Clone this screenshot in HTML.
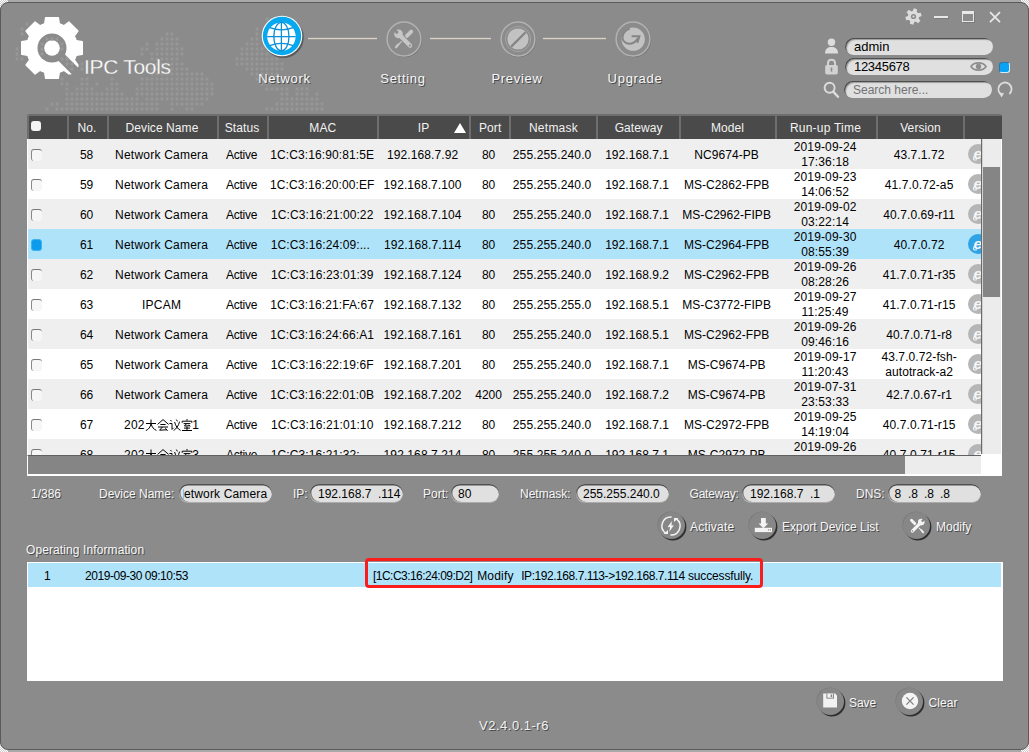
<!DOCTYPE html>
<html><head><meta charset="utf-8"><title>IPC Tools</title>
<style>
html,body{margin:0;padding:0;}
body{width:1029px;height:752px;overflow:hidden;background:#a9a9a9;font-family:"Liberation Sans",sans-serif;font-size:12px;color:#000;position:relative;}
.cb{position:absolute;width:8px;height:8px;background-color:#fff;background-image:linear-gradient(45deg,#ccc 25%,transparent 25%,transparent 75%,#ccc 75%),linear-gradient(45deg,#ccc 25%,transparent 25%,transparent 75%,#ccc 75%);background-size:2px 2px;background-position:0 0,1px 1px;}
.c1{left:0;top:0}.c2{right:0;top:0}.c3{left:0;bottom:0}.c4{right:0;bottom:0}
#frame{position:absolute;left:0;top:2px;width:1029px;height:748px;border:1px solid #5a5a5a;border-radius:8px;background:#8b8b8b;}
#win{position:absolute;left:0;top:0;width:1029px;height:752px;}
#win *{position:absolute;box-sizing:border-box;}
.sh{color:#f7f7f7;text-shadow:1px 1px 0 #4a4a4a;white-space:nowrap;}

/* ---------- table header ---------- */
#thead{left:27px;top:114px;width:975px;height:25px;border-top-left-radius:3px;border-top-right-radius:2px;background:#4a4a4a;border-top:2px solid #6e6e6e;border-left:2px solid #6e6e6e;overflow:hidden;}
#thead .th{top:-1px;height:24px;line-height:26px;letter-spacing:.08px;text-align:center;color:#f2f2f2;font-size:12px;white-space:nowrap;margin-left:-3px;}
#thead .hs{top:0;width:2px;height:23px;background:#6e6e6e;margin-left:-2px;}
.hchk{left:5px;top:5.5px;width:10px;height:10px;border-radius:3px;background:#f4f4f4;}
.ipt{left:0;width:100%;top:0;text-align:center;padding-right:2px;}
.tri{right:4.7px;top:8px;width:0;height:0;border-left:6px solid transparent;border-right:6px solid transparent;border-bottom:10px solid #fff;}

/* ---------- table body ---------- */
#tbody{left:27px;top:139px;width:955px;height:316px;background:#fff;overflow:hidden;border-left:1px solid #fff;}
.tr{left:0;width:975px;height:30px;background:#fff;}
.tr.alt{background:#efefef;}
.tr.sel{background:#afe3fa;}
.td{top:1px;height:30px;line-height:30px;text-align:center;white-space:nowrap;font-size:12px;color:#000;margin-left:-2.4px;}
.td.la{text-align:left;padding-left:4.2px;}
.k1{letter-spacing:.22px}.k3{letter-spacing:.1px;padding-left:1.2px}.k2{letter-spacing:-.25px}.k4{letter-spacing:.1px}.k6{letter-spacing:.15px}.k7{letter-spacing:.05px}.k9{letter-spacing:.15px}.k8{letter-spacing:.05px}.k10{letter-spacing:.1px}
.td.two{line-height:15px;top:1px;}
.chk{left:3px;top:10px;width:11px;height:12px;border-radius:3px;background:#f6f6f6;border-top:1px solid #777;border-left:1px solid #888;}
.chk.on{background:#0d9cec;border:1px solid #3ab4f2;}
.ie{left:940px;top:5px;width:20px;height:20px;}
.ie svg{left:0;top:0;}
.iec{fill:#b6b6b6}.ie.on .iec{fill:#2ea3e6}
.iee{fill:#f4f4f4;fill-rule:evenodd}
.ieo{fill:none;stroke:#f4f4f4;stroke-width:1.1}
.iet{fill:#f6f6f6}
#vsb{left:981px;top:139px;width:21px;height:315px;background:#ececec;border-left:1.4px solid #6a6a6a;box-shadow:inset 1px 0 0 #d2d2d2;border-right:1px solid #fff;}
#vth{left:.8px;top:28px;width:17px;height:130px;background:#858585;}
#hsb{left:27px;top:455px;width:954px;height:19px;background:#ececec;border-top:1.5px solid #606060;border-left:1px solid #fff;}
#hth{left:0;top:0;width:877px;height:17.5px;background:#858585;}
#corner{left:981px;top:454px;width:21px;height:22px;background:#fff;}
#tbot{left:27px;top:474px;width:975px;height:2px;background:#fff;}

/* ---------- top ---------- */

#brand{left:84px;top:54px;font-size:21px;line-height:26px;color:#fff;letter-spacing:-.3px;white-space:nowrap;-webkit-text-stroke:.28px #8e8e8e;}
.nline{top:37px;height:3px;background:linear-gradient(#8b8b8b00 0,#d9cfc455 33%,#ddd2c6 34%,#ddd2c6 66%,#d9cfc466 67%,#8b8b8b00 100%);}
.nlab{top:70px;height:18px;line-height:18px;text-align:center;font-size:13px;letter-spacing:.7px;}
.pill{background:#e0e0e0;border-radius:9px;box-shadow:inset 1px 1px 0 #4e4e4e, inset 2px 2px 1px #9c9c9c;overflow:hidden;}
.ptx{top:0;height:19px;line-height:19px;font-size:12px;color:#000;white-space:nowrap;}

/* ---------- bottom ---------- */
.lab{height:19px;line-height:19px;font-size:12px;}
.pill.f{height:18px;border-radius:9px;box-shadow:inset 0 1.5px 0 #505050, inset 1.5px 0 .5px #858585, 0 .8px 0 #b8b8b8;}
.pill.f>*{margin:1px 0 0 1px;}
.rb{width:27px;height:27px;border-radius:14px;background:#878787;box-shadow:1.4px 1.4px .4px #2e2e2e, -.6px -.6px .6px #7a7a7a;margin:.5px 0 0 .3px;}
#log{left:27px;top:562px;width:976px;height:119px;background:#fff;border:1px solid #fff;}
#logrow{left:0;top:0;width:973px;height:24px;background:#afe3fa;}
.lt{top:0;height:26px;line-height:26px;font-size:12px;white-space:nowrap;letter-spacing:-.45px;color:#000;}
.lt.m{letter-spacing:-.3px}
#redbox{left:365px;top:558px;width:398px;height:30px;border:3px solid #fb1c1c;border-radius:4px;}
#ver{left:429px;top:717.5px;width:170px;height:16px;line-height:16px;text-align:center;font-size:13px;letter-spacing:.5px;color:#f0f0f0;}

#win .cj{position:static;display:inline-block;vertical-align:-2px;margin:0 -.3px 0 -.1px;}

</style></head>
<body>
<div class="cb c1"></div><div class="cb c2"></div><div class="cb c3"></div><div class="cb c4"></div>
<div id="win">
<div id="frame"></div>
<svg id="map" style="left:0;top:0" width="340" height="114" viewBox="0 0 340 114"><path fill="#979797" d="M265.6 17.6h2.8v2.8h-2.8zM25.6 22.6h2.8v2.8h-2.8zM20.6 27.6h2.8v2.8h-2.8zM255.6 27.6h2.8v2.8h-2.8zM20.6 32.6h2.8v2.8h-2.8zM165.6 32.6h2.8v2.8h-2.8zM170.6 32.6h2.8v2.8h-2.8zM255.6 32.6h2.8v2.8h-2.8zM160.6 37.6h2.8v2.8h-2.8zM165.6 37.6h2.8v2.8h-2.8zM170.6 37.6h2.8v2.8h-2.8zM175.6 37.6h2.8v2.8h-2.8zM250.6 37.6h2.8v2.8h-2.8zM255.6 37.6h2.8v2.8h-2.8zM145.6 42.6h2.8v2.8h-2.8zM155.6 42.6h2.8v2.8h-2.8zM160.6 42.6h2.8v2.8h-2.8zM165.6 42.6h2.8v2.8h-2.8zM170.6 42.6h2.8v2.8h-2.8zM175.6 42.6h2.8v2.8h-2.8zM245.6 42.6h2.8v2.8h-2.8zM250.6 42.6h2.8v2.8h-2.8zM255.6 42.6h2.8v2.8h-2.8zM15.6 47.6h2.8v2.8h-2.8zM140.6 47.6h2.8v2.8h-2.8zM145.6 47.6h2.8v2.8h-2.8zM155.6 47.6h2.8v2.8h-2.8zM160.6 47.6h2.8v2.8h-2.8zM165.6 47.6h2.8v2.8h-2.8zM170.6 47.6h2.8v2.8h-2.8zM175.6 47.6h2.8v2.8h-2.8zM180.6 47.6h2.8v2.8h-2.8zM240.6 47.6h2.8v2.8h-2.8zM245.6 47.6h2.8v2.8h-2.8zM250.6 47.6h2.8v2.8h-2.8zM255.6 47.6h2.8v2.8h-2.8zM260.6 47.6h2.8v2.8h-2.8zM15.6 52.6h2.8v2.8h-2.8zM140.6 52.6h2.8v2.8h-2.8zM150.6 52.6h2.8v2.8h-2.8zM155.6 52.6h2.8v2.8h-2.8zM160.6 52.6h2.8v2.8h-2.8zM165.6 52.6h2.8v2.8h-2.8zM170.6 52.6h2.8v2.8h-2.8zM175.6 52.6h2.8v2.8h-2.8zM180.6 52.6h2.8v2.8h-2.8zM240.6 52.6h2.8v2.8h-2.8zM245.6 52.6h2.8v2.8h-2.8zM250.6 52.6h2.8v2.8h-2.8zM255.6 52.6h2.8v2.8h-2.8zM260.6 52.6h2.8v2.8h-2.8zM265.6 52.6h2.8v2.8h-2.8zM15.6 57.6h2.8v2.8h-2.8zM20.6 57.6h2.8v2.8h-2.8zM150.6 57.6h2.8v2.8h-2.8zM155.6 57.6h2.8v2.8h-2.8zM160.6 57.6h2.8v2.8h-2.8zM165.6 57.6h2.8v2.8h-2.8zM170.6 57.6h2.8v2.8h-2.8zM175.6 57.6h2.8v2.8h-2.8zM235.6 57.6h2.8v2.8h-2.8zM240.6 57.6h2.8v2.8h-2.8zM245.6 57.6h2.8v2.8h-2.8zM250.6 57.6h2.8v2.8h-2.8zM255.6 57.6h2.8v2.8h-2.8zM260.6 57.6h2.8v2.8h-2.8zM265.6 57.6h2.8v2.8h-2.8zM270.6 57.6h2.8v2.8h-2.8zM275.6 57.6h2.8v2.8h-2.8zM80.6 62.6h2.8v2.8h-2.8zM155.6 62.6h2.8v2.8h-2.8zM160.6 62.6h2.8v2.8h-2.8zM165.6 62.6h2.8v2.8h-2.8zM170.6 62.6h2.8v2.8h-2.8zM175.6 62.6h2.8v2.8h-2.8zM180.6 62.6h2.8v2.8h-2.8zM235.6 62.6h2.8v2.8h-2.8zM240.6 62.6h2.8v2.8h-2.8zM245.6 62.6h2.8v2.8h-2.8zM250.6 62.6h2.8v2.8h-2.8zM255.6 62.6h2.8v2.8h-2.8zM260.6 62.6h2.8v2.8h-2.8zM265.6 62.6h2.8v2.8h-2.8zM270.6 62.6h2.8v2.8h-2.8zM275.6 62.6h2.8v2.8h-2.8zM280.6 62.6h2.8v2.8h-2.8zM75.6 67.6h2.8v2.8h-2.8zM80.6 67.6h2.8v2.8h-2.8zM150.6 67.6h2.8v2.8h-2.8zM155.6 67.6h2.8v2.8h-2.8zM160.6 67.6h2.8v2.8h-2.8zM165.6 67.6h2.8v2.8h-2.8zM170.6 67.6h2.8v2.8h-2.8zM175.6 67.6h2.8v2.8h-2.8zM180.6 67.6h2.8v2.8h-2.8zM185.6 67.6h2.8v2.8h-2.8zM245.6 67.6h2.8v2.8h-2.8zM250.6 67.6h2.8v2.8h-2.8zM255.6 67.6h2.8v2.8h-2.8zM260.6 67.6h2.8v2.8h-2.8zM265.6 67.6h2.8v2.8h-2.8zM270.6 67.6h2.8v2.8h-2.8zM275.6 67.6h2.8v2.8h-2.8zM280.6 67.6h2.8v2.8h-2.8zM70.6 72.6h2.8v2.8h-2.8zM150.6 72.6h2.8v2.8h-2.8zM155.6 72.6h2.8v2.8h-2.8zM160.6 72.6h2.8v2.8h-2.8zM165.6 72.6h2.8v2.8h-2.8zM170.6 72.6h2.8v2.8h-2.8zM175.6 72.6h2.8v2.8h-2.8zM180.6 72.6h2.8v2.8h-2.8zM185.6 72.6h2.8v2.8h-2.8zM190.6 72.6h2.8v2.8h-2.8zM195.6 72.6h2.8v2.8h-2.8zM200.6 72.6h2.8v2.8h-2.8zM250.6 72.6h2.8v2.8h-2.8zM255.6 72.6h2.8v2.8h-2.8zM260.6 72.6h2.8v2.8h-2.8zM265.6 72.6h2.8v2.8h-2.8zM270.6 72.6h2.8v2.8h-2.8zM275.6 72.6h2.8v2.8h-2.8zM60.6 77.6h2.8v2.8h-2.8zM80.6 77.6h2.8v2.8h-2.8zM85.6 77.6h2.8v2.8h-2.8zM110.6 77.6h2.8v2.8h-2.8zM140.6 77.6h2.8v2.8h-2.8zM145.6 77.6h2.8v2.8h-2.8zM150.6 77.6h2.8v2.8h-2.8zM155.6 77.6h2.8v2.8h-2.8zM160.6 77.6h2.8v2.8h-2.8zM165.6 77.6h2.8v2.8h-2.8zM170.6 77.6h2.8v2.8h-2.8zM175.6 77.6h2.8v2.8h-2.8zM180.6 77.6h2.8v2.8h-2.8zM185.6 77.6h2.8v2.8h-2.8zM190.6 77.6h2.8v2.8h-2.8zM195.6 77.6h2.8v2.8h-2.8zM200.6 77.6h2.8v2.8h-2.8zM205.6 77.6h2.8v2.8h-2.8zM255.6 77.6h2.8v2.8h-2.8zM260.6 77.6h2.8v2.8h-2.8zM265.6 77.6h2.8v2.8h-2.8zM270.6 77.6h2.8v2.8h-2.8zM60.6 82.6h2.8v2.8h-2.8zM65.6 82.6h2.8v2.8h-2.8zM80.6 82.6h2.8v2.8h-2.8zM85.6 82.6h2.8v2.8h-2.8zM95.6 82.6h2.8v2.8h-2.8zM110.6 82.6h2.8v2.8h-2.8zM115.6 82.6h2.8v2.8h-2.8zM140.6 82.6h2.8v2.8h-2.8zM145.6 82.6h2.8v2.8h-2.8zM150.6 82.6h2.8v2.8h-2.8zM155.6 82.6h2.8v2.8h-2.8zM160.6 82.6h2.8v2.8h-2.8zM165.6 82.6h2.8v2.8h-2.8zM170.6 82.6h2.8v2.8h-2.8zM175.6 82.6h2.8v2.8h-2.8zM180.6 82.6h2.8v2.8h-2.8zM185.6 82.6h2.8v2.8h-2.8zM190.6 82.6h2.8v2.8h-2.8zM195.6 82.6h2.8v2.8h-2.8zM200.6 82.6h2.8v2.8h-2.8zM205.6 82.6h2.8v2.8h-2.8zM210.6 82.6h2.8v2.8h-2.8zM260.6 82.6h2.8v2.8h-2.8zM265.6 82.6h2.8v2.8h-2.8zM65.6 87.6h2.8v2.8h-2.8zM75.6 87.6h2.8v2.8h-2.8zM80.6 87.6h2.8v2.8h-2.8zM85.6 87.6h2.8v2.8h-2.8zM90.6 87.6h2.8v2.8h-2.8zM105.6 87.6h2.8v2.8h-2.8zM110.6 87.6h2.8v2.8h-2.8zM115.6 87.6h2.8v2.8h-2.8zM135.6 87.6h2.8v2.8h-2.8zM140.6 87.6h2.8v2.8h-2.8zM145.6 87.6h2.8v2.8h-2.8zM150.6 87.6h2.8v2.8h-2.8zM155.6 87.6h2.8v2.8h-2.8zM160.6 87.6h2.8v2.8h-2.8zM165.6 87.6h2.8v2.8h-2.8zM170.6 87.6h2.8v2.8h-2.8zM175.6 87.6h2.8v2.8h-2.8zM180.6 87.6h2.8v2.8h-2.8zM185.6 87.6h2.8v2.8h-2.8zM190.6 87.6h2.8v2.8h-2.8zM195.6 87.6h2.8v2.8h-2.8zM200.6 87.6h2.8v2.8h-2.8zM205.6 87.6h2.8v2.8h-2.8zM210.6 87.6h2.8v2.8h-2.8zM265.6 87.6h2.8v2.8h-2.8zM270.6 87.6h2.8v2.8h-2.8zM275.6 87.6h2.8v2.8h-2.8zM280.6 87.6h2.8v2.8h-2.8zM285.6 87.6h2.8v2.8h-2.8zM295.6 87.6h2.8v2.8h-2.8zM300.6 87.6h2.8v2.8h-2.8zM305.6 87.6h2.8v2.8h-2.8zM65.6 92.6h2.8v2.8h-2.8zM70.6 92.6h2.8v2.8h-2.8zM75.6 92.6h2.8v2.8h-2.8zM80.6 92.6h2.8v2.8h-2.8zM85.6 92.6h2.8v2.8h-2.8zM90.6 92.6h2.8v2.8h-2.8zM95.6 92.6h2.8v2.8h-2.8zM100.6 92.6h2.8v2.8h-2.8zM105.6 92.6h2.8v2.8h-2.8zM110.6 92.6h2.8v2.8h-2.8zM115.6 92.6h2.8v2.8h-2.8zM120.6 92.6h2.8v2.8h-2.8zM135.6 92.6h2.8v2.8h-2.8zM140.6 92.6h2.8v2.8h-2.8zM145.6 92.6h2.8v2.8h-2.8zM150.6 92.6h2.8v2.8h-2.8zM155.6 92.6h2.8v2.8h-2.8zM160.6 92.6h2.8v2.8h-2.8zM165.6 92.6h2.8v2.8h-2.8zM170.6 92.6h2.8v2.8h-2.8zM175.6 92.6h2.8v2.8h-2.8zM180.6 92.6h2.8v2.8h-2.8zM185.6 92.6h2.8v2.8h-2.8zM190.6 92.6h2.8v2.8h-2.8zM195.6 92.6h2.8v2.8h-2.8zM200.6 92.6h2.8v2.8h-2.8zM205.6 92.6h2.8v2.8h-2.8zM210.6 92.6h2.8v2.8h-2.8zM280.6 92.6h2.8v2.8h-2.8zM285.6 92.6h2.8v2.8h-2.8zM295.6 92.6h2.8v2.8h-2.8zM300.6 92.6h2.8v2.8h-2.8zM305.6 92.6h2.8v2.8h-2.8zM315.6 92.6h2.8v2.8h-2.8zM65.6 97.6h2.8v2.8h-2.8zM70.6 97.6h2.8v2.8h-2.8zM75.6 97.6h2.8v2.8h-2.8zM80.6 97.6h2.8v2.8h-2.8zM85.6 97.6h2.8v2.8h-2.8zM90.6 97.6h2.8v2.8h-2.8zM95.6 97.6h2.8v2.8h-2.8zM100.6 97.6h2.8v2.8h-2.8zM105.6 97.6h2.8v2.8h-2.8zM110.6 97.6h2.8v2.8h-2.8zM115.6 97.6h2.8v2.8h-2.8zM120.6 97.6h2.8v2.8h-2.8zM125.6 97.6h2.8v2.8h-2.8zM130.6 97.6h2.8v2.8h-2.8zM135.6 97.6h2.8v2.8h-2.8zM145.6 97.6h2.8v2.8h-2.8zM150.6 97.6h2.8v2.8h-2.8zM155.6 97.6h2.8v2.8h-2.8zM160.6 97.6h2.8v2.8h-2.8zM165.6 97.6h2.8v2.8h-2.8zM170.6 97.6h2.8v2.8h-2.8zM175.6 97.6h2.8v2.8h-2.8zM180.6 97.6h2.8v2.8h-2.8zM185.6 97.6h2.8v2.8h-2.8zM190.6 97.6h2.8v2.8h-2.8zM195.6 97.6h2.8v2.8h-2.8zM200.6 97.6h2.8v2.8h-2.8zM205.6 97.6h2.8v2.8h-2.8zM280.6 97.6h2.8v2.8h-2.8zM285.6 97.6h2.8v2.8h-2.8zM290.6 97.6h2.8v2.8h-2.8zM295.6 97.6h2.8v2.8h-2.8zM300.6 97.6h2.8v2.8h-2.8zM305.6 97.6h2.8v2.8h-2.8zM310.6 97.6h2.8v2.8h-2.8zM315.6 97.6h2.8v2.8h-2.8zM50.6 102.6h2.8v2.8h-2.8zM55.6 102.6h2.8v2.8h-2.8zM65.6 102.6h2.8v2.8h-2.8zM70.6 102.6h2.8v2.8h-2.8zM75.6 102.6h2.8v2.8h-2.8zM80.6 102.6h2.8v2.8h-2.8zM85.6 102.6h2.8v2.8h-2.8zM90.6 102.6h2.8v2.8h-2.8zM95.6 102.6h2.8v2.8h-2.8zM100.6 102.6h2.8v2.8h-2.8zM105.6 102.6h2.8v2.8h-2.8zM110.6 102.6h2.8v2.8h-2.8zM115.6 102.6h2.8v2.8h-2.8zM120.6 102.6h2.8v2.8h-2.8zM125.6 102.6h2.8v2.8h-2.8zM130.6 102.6h2.8v2.8h-2.8zM135.6 102.6h2.8v2.8h-2.8zM140.6 102.6h2.8v2.8h-2.8zM145.6 102.6h2.8v2.8h-2.8zM150.6 102.6h2.8v2.8h-2.8zM155.6 102.6h2.8v2.8h-2.8zM170.6 102.6h2.8v2.8h-2.8zM175.6 102.6h2.8v2.8h-2.8zM180.6 102.6h2.8v2.8h-2.8zM185.6 102.6h2.8v2.8h-2.8zM190.6 102.6h2.8v2.8h-2.8zM195.6 102.6h2.8v2.8h-2.8zM200.6 102.6h2.8v2.8h-2.8zM275.6 102.6h2.8v2.8h-2.8zM280.6 102.6h2.8v2.8h-2.8zM285.6 102.6h2.8v2.8h-2.8zM290.6 102.6h2.8v2.8h-2.8zM295.6 102.6h2.8v2.8h-2.8zM300.6 102.6h2.8v2.8h-2.8zM305.6 102.6h2.8v2.8h-2.8zM310.6 102.6h2.8v2.8h-2.8zM315.6 102.6h2.8v2.8h-2.8zM320.6 102.6h2.8v2.8h-2.8zM45.6 107.6h2.8v2.8h-2.8zM55.6 107.6h2.8v2.8h-2.8zM60.6 107.6h2.8v2.8h-2.8zM65.6 107.6h2.8v2.8h-2.8zM70.6 107.6h2.8v2.8h-2.8zM75.6 107.6h2.8v2.8h-2.8zM80.6 107.6h2.8v2.8h-2.8zM85.6 107.6h2.8v2.8h-2.8zM90.6 107.6h2.8v2.8h-2.8zM95.6 107.6h2.8v2.8h-2.8zM100.6 107.6h2.8v2.8h-2.8zM105.6 107.6h2.8v2.8h-2.8zM110.6 107.6h2.8v2.8h-2.8zM115.6 107.6h2.8v2.8h-2.8zM120.6 107.6h2.8v2.8h-2.8zM125.6 107.6h2.8v2.8h-2.8zM130.6 107.6h2.8v2.8h-2.8zM135.6 107.6h2.8v2.8h-2.8zM140.6 107.6h2.8v2.8h-2.8zM145.6 107.6h2.8v2.8h-2.8zM150.6 107.6h2.8v2.8h-2.8zM155.6 107.6h2.8v2.8h-2.8zM170.6 107.6h2.8v2.8h-2.8zM185.6 107.6h2.8v2.8h-2.8zM190.6 107.6h2.8v2.8h-2.8zM265.6 107.6h2.8v2.8h-2.8zM270.6 107.6h2.8v2.8h-2.8zM275.6 107.6h2.8v2.8h-2.8zM280.6 107.6h2.8v2.8h-2.8zM285.6 107.6h2.8v2.8h-2.8zM290.6 107.6h2.8v2.8h-2.8zM295.6 107.6h2.8v2.8h-2.8zM300.6 107.6h2.8v2.8h-2.8zM305.6 107.6h2.8v2.8h-2.8zM310.6 107.6h2.8v2.8h-2.8zM315.6 107.6h2.8v2.8h-2.8zM320.6 107.6h2.8v2.8h-2.8z"/></svg>
<!-- logo gear -->
<svg id="logo" style="left:19px;top:15px" width="66" height="66" viewBox="-33 -33 66 66">
<g fill="#fff">
<circle r="26"/>
<path d="M-6.4 -31 Q-7 -31 -7.05 -30.4 L-8.2 -23 H8.2 L7.05 -30.4 Q7 -31 6.4 -31 Z" transform="rotate(0)"/>
<path d="M-6.4 -31 Q-7 -31 -7.05 -30.4 L-8.2 -23 H8.2 L7.05 -30.4 Q7 -31 6.4 -31 Z" transform="rotate(45)"/>
<path d="M-6.4 -31 Q-7 -31 -7.05 -30.4 L-8.2 -23 H8.2 L7.05 -30.4 Q7 -31 6.4 -31 Z" transform="rotate(90)"/>
<path d="M-6.4 -31 Q-7 -31 -7.05 -30.4 L-8.2 -23 H8.2 L7.05 -30.4 Q7 -31 6.4 -31 Z" transform="rotate(135)"/>
<path d="M-6.4 -31 Q-7 -31 -7.05 -30.4 L-8.2 -23 H8.2 L7.05 -30.4 Q7 -31 6.4 -31 Z" transform="rotate(180)"/>
<path d="M-6.4 -31 Q-7 -31 -7.05 -30.4 L-8.2 -23 H8.2 L7.05 -30.4 Q7 -31 6.4 -31 Z" transform="rotate(225)"/>
<path d="M-6.4 -31 Q-7 -31 -7.05 -30.4 L-8.2 -23 H8.2 L7.05 -30.4 Q7 -31 6.4 -31 Z" transform="rotate(270)"/>
<path d="M-6.4 -31 Q-7 -31 -7.05 -30.4 L-8.2 -23 H8.2 L7.05 -30.4 Q7 -31 6.4 -31 Z" transform="rotate(315)"/>
</g>
<path d="M4 4 L22.6 22.6" stroke="#fff" stroke-width="12" fill="none"/>
<path d="M4 4 L24 24" stroke="#8b8b8b" stroke-width="9" fill="none"/>
<circle r="14.5" cx="0" cy="0" fill="#8b8b8b"/>
<circle r="7.8" cx="0" cy="0" fill="#fff"/>
</svg>
<svg id="map2" style="left:0;top:0" width="120" height="114" viewBox="0 0 120 114"><path fill="#999" d="M45.6 37.6h2.8v2.8h-2.8zM50.6 37.6h2.8v2.8h-2.8zM55.6 37.6h2.8v2.8h-2.8zM40.6 42.6h2.8v2.8h-2.8zM60.6 42.6h2.8v2.8h-2.8zM40.6 47.6h2.8v2.8h-2.8zM60.6 47.6h2.8v2.8h-2.8zM40.6 52.6h2.8v2.8h-2.8zM60.6 57.6h2.8v2.8h-2.8zM65.6 57.6h2.8v2.8h-2.8zM65.6 62.6h2.8v2.8h-2.8zM70.6 62.6h2.8v2.8h-2.8zM70.6 67.6h2.8v2.8h-2.8z"/></svg>
<div id="brand">IPC Tools</div>

<!-- nav -->
<div class="nline" style="left:308px;width:69px"></div>
<div class="nline" style="left:430px;width:61px"></div>
<div class="nline" style="left:543px;width:63px"></div>

<svg class="nav" style="left:257px;top:11px" width="50" height="50" viewBox="-25 -25 50 50">
<circle cx="1.4" cy="1.6" r="20.4" fill="#3c3c3c" opacity=".6"/>
<circle r="20.3" fill="#fff"/>
<circle r="19.2" fill="#06a9f0"/>
<circle cx="-0.6" cy="0.6" r="14.2" fill="#fff"/>
<g fill="none" stroke="#0b8fd6" stroke-width="1.3" transform="translate(-0.6 0.6)">
<ellipse rx="7.6" ry="14.2"/>
<path d="M0 -14.2 V14.2 M-14.2 0 H14.2"/>
<path d="M-11.6 -9 Q0 -4.6 11.6 -9"/>
<path d="M-11.6 9 Q0 4.6 11.6 9"/>
</g>
</svg>

<svg class="nav" style="left:383.5px;top:18.7px" width="40" height="40" viewBox="-20 -20 40 40">
<circle cx=".7" cy=".8" r="16.9" fill="none" stroke="#777" stroke-width="1.2"/>
<circle r="16.9" fill="#8b8b8b" stroke="#b2b2b2" stroke-width="1.5"/>
<g stroke-linecap="round" fill="none">
<path d="M2 -2 L-6 6" stroke="#c6c6c6" stroke-width="1.3"/>
<path d="M-5.8 5.6 L-8 8.2" stroke="#c6c6c6" stroke-width="2.3"/>
<path d="M2.4 -2.6 L7.2 -7.4" stroke="#c6c6c6" stroke-width="3.8"/>
<path d="M-4 -3.5 L6 6.6" stroke="#8b8b8b" stroke-width="6.2"/>
<path d="M-4 -3.5 L6 6.6" stroke="#c6c6c6" stroke-width="4.3"/>
</g>
<circle cx="-5.5" cy="-5.1" r="4.3" fill="#c6c6c6"/>
<path d="M-10.4 -10 L-6.3 -5.9" stroke="#8b8b8b" stroke-width="2.9"/>
<circle cx="5.9" cy="6.5" r="1.05" fill="#8b8b8b"/>
</svg>

<svg class="nav" style="left:497.7px;top:18.6px" width="40" height="40" viewBox="-20 -20 40 40">
<circle cx=".7" cy=".8" r="16.9" fill="none" stroke="#777" stroke-width="1.2"/>
<circle r="16.9" fill="#8b8b8b" stroke="#b2b2b2" stroke-width="1.5"/>
<circle r="12.6" fill="none" stroke="#a4a4a4" stroke-width="1"/>
<circle r="10.6" fill="#c2c2c2"/>
<path d="M-6.8 7.6 L7.6 -6.8" stroke="#848484" stroke-width="2.2" stroke-linecap="butt"/>
</svg>

<svg class="nav" style="left:612.6px;top:18.6px" width="40" height="40" viewBox="-20 -20 40 40">
<circle cx=".7" cy=".8" r="16.9" fill="none" stroke="#777" stroke-width="1.2"/>
<circle r="16.9" fill="#8b8b8b" stroke="#b2b2b2" stroke-width="1.5"/>
<circle r="11.6" cx=".2" cy=".2" fill="#c2c2c2"/>
<path d="M-3.2 -10.4 C-10.4 -8 -12.2 -0.6 -8.6 2.8 C-5 6.2 1.8 5.2 5 -1" stroke="#858585" stroke-width="1.9" fill="none"/>
<path d="M-1.4 -2.8 H6.4 L4.4 3.8" stroke="#858585" stroke-width="2" fill="none" stroke-linejoin="miter"/>
</svg>

<div class="nlab sh" style="left:234.5px;width:100px">Network</div>
<div class="nlab sh" style="left:353px;width:100px">Setting</div>
<div class="nlab sh" style="left:467px;width:100px">Preview</div>
<div class="nlab sh" style="left:585px;width:100px">Upgrade</div>

<!-- window controls -->
<svg style="left:905px;top:7.6px" width="17" height="17" viewBox="-8.5 -8.5 17 17">
<g fill="#dcdcdc" transform="rotate(14)">
<path d="M-1.7 -8 H1.7 L2.2 -4 H-2.2 Z"/>
<path d="M-1.7 -8 H1.7 L2.2 -4 H-2.2 Z" transform="rotate(60)"/>
<path d="M-1.7 -8 H1.7 L2.2 -4 H-2.2 Z" transform="rotate(120)"/>
<path d="M-1.7 -8 H1.7 L2.2 -4 H-2.2 Z" transform="rotate(180)"/>
<path d="M-1.7 -8 H1.7 L2.2 -4 H-2.2 Z" transform="rotate(240)"/>
<path d="M-1.7 -8 H1.7 L2.2 -4 H-2.2 Z" transform="rotate(300)"/>
<circle r="5.6"/>
</g>
<circle r="2.6" fill="#8b8b8b"/>
<circle r="1.1" fill="#dcdcdc"/>
</svg>
<div style="left:934px;top:16px;width:14px;height:2px;background:#e8e8e8;box-shadow:1px 1px 0 #7a7a7a"></div>
<div style="left:962px;top:11px;width:12px;height:11px;border:1px solid #e8e8e8;border-top-width:3px;box-shadow:1px 1px 0 #7a7a7a"></div>
<svg style="left:988px;top:10px" width="14" height="14" viewBox="0 0 14 14"><path d="M2 2.2 L12 12.2 M12 2.2 L2 12.2" stroke="#e8e8e8" stroke-width="1.7" fill="none"/></svg>

<!-- login fields -->
<svg style="left:823px;top:37px" width="17" height="18" viewBox="0 0 17 18"><circle cx="8.5" cy="5.3" r="3.7" fill="#dcdcdc"/><path d="M2 16.5 C2 11.5 5 10 8.5 10 C12 10 15 11.5 15 16.5 Z" fill="#dcdcdc"/></svg>
<svg style="left:823px;top:57px" width="17" height="19" viewBox="0 0 17 19"><path d="M5 9 V6 C5 1.6 12 1.6 12 6 V9" stroke="#d2d2d2" stroke-width="2" fill="none"/><rect x="2.2" y="8" width="12.6" height="9.4" rx="1.6" fill="#d2d2d2"/><rect x="7.7" y="10.6" width="1.6" height="4" fill="#8b8b8b"/></svg>
<svg style="left:822px;top:80px" width="18" height="19" viewBox="0 0 18 19"><circle cx="7.6" cy="7.8" r="5" stroke="#dcdcdc" stroke-width="1.9" fill="none"/><path d="M11.2 11.6 L16 16.8" stroke="#dcdcdc" stroke-width="2.4" stroke-linecap="round"/></svg>

<div class="pill" style="left:845px;top:38px;width:148px;height:17px"><span class="ptx" style="left:9px;font-size:13px;line-height:17px">admin</span></div>
<div class="pill" style="left:845px;top:58px;width:148px;height:17px"><span class="ptx" style="left:9px;font-size:13px;letter-spacing:-.3px;line-height:17px">12345678</span>
<svg style="left:125px;top:3px" width="17" height="11" viewBox="0 0 17 11"><path d="M1 5.5 C4 0.6 13 0.6 16 5.5 C13 10.4 4 10.4 1 5.5 Z" fill="none" stroke="#8e8e8e" stroke-width="1.7"/><circle cx="8.5" cy="5.5" r="2.7" fill="#8e8e8e"/></svg>
</div>
<div class="pill" style="left:844px;top:81px;width:148px;height:17px"><span class="ptx" style="left:9px;color:#737373">Search here...</span></div>
<div style="left:999px;top:62px;width:11px;height:11px;border-radius:3px;background:#0aa2f2;border-right:1px solid #d5eefb;border-bottom:1px solid #d5eefb;border-top:1px solid #2a78a8;border-left:1px solid #2a78a8"></div>
<svg style="left:996px;top:80px" width="18" height="18" viewBox="-9 -9 18 18"><path d="M-2.6 6.2 A6.6 6.6 0 1 1 4.4 5" stroke="#dcdcdc" stroke-width="1.8" fill="none"/><path d="M-6.2 3.2 L-1 4.2 L-3.6 8.4 Z" fill="#dcdcdc"/></svg>
<div id="thead">
<div class="th" style="left:0px;width:41px"><span class="hchk"></span></div>
<div class="th" style="left:41px;width:40px">No.</div>
<div class="th" style="left:81px;width:110px">Device Name</div>
<div class="th" style="left:191px;width:50px">Status</div>
<div class="th" style="left:241.8px;width:110px">MAC</div>
<div class="th" style="left:352.5px;width:92px"><span class="ipt">IP</span><span class="tri"></span></div>
<div class="th" style="left:444.2px;width:40px">Port</div>
<div class="th" style="left:484px;width:87px;letter-spacing:0.25px">Netmask</div>
<div class="th" style="left:571.1px;width:83px">Gateway</div>
<div class="th" style="left:653.5px;width:96px">Model</div>
<div class="th" style="left:749px;width:101px;letter-spacing:0.22px">Run-up Time</div>
<div class="th" style="left:851px;width:87px">Version</div>
<div class="th" style="left:937px;width:38px"></div>
<div class="hs" style="left:40px"></div>
<div class="hs" style="left:80px"></div>
<div class="hs" style="left:190px"></div>
<div class="hs" style="left:240px"></div>
<div class="hs" style="left:350px"></div>
<div class="hs" style="left:442px"></div>
<div class="hs" style="left:482px"></div>
<div class="hs" style="left:569px"></div>
<div class="hs" style="left:652px"></div>
<div class="hs" style="left:748px"></div>
<div class="hs" style="left:849px"></div>
<div class="hs" style="left:936px"></div>
</div>
<div id="tbody">
<div class="tr alt" style="top:0px">
<span class="chk"></span><div class="td k0" style="left:41px;width:40px">58</div><div class="td k1" style="left:81px;width:110px">Network Camera</div><div class="td k2" style="left:191px;width:50px">Active</div><div class="td k3" style="left:241px;width:110px">1C:C3:16:90:81:5E</div><div class="td k4" style="left:351px;width:92px">192.168.7.92</div><div class="td k5" style="left:443px;width:40px">80</div><div class="td k6" style="left:483px;width:87px">255.255.240.0</div><div class="td k7" style="left:570px;width:83px">192.168.7.1</div><div class="td k8" style="left:653px;width:96px">NC9674-PB</div><div class="td k9 two" style="left:749px;width:101px">2019-09-24<br>17:36:18</div><div class="td k10" style="left:850px;width:87px">43.7.1.72</div><div class="ie"><svg width="20" height="20" viewBox="0 0 20 20"><circle cx="10" cy="10" r="10" class="iec"/><text x="5.6" y="14.6" font-family="Liberation Sans, sans-serif" font-weight="bold" font-style="italic" font-size="15.5" class="iet">e</text><path class="ieo" d="M6.2 12.4 C4.6 15.6 6 16.8 9 15.4 M13.4 4.6 C15.6 3.2 17 4 16 6"/></svg></div>
</div>
<div class="tr" style="top:30px">
<span class="chk"></span><div class="td k0" style="left:41px;width:40px">59</div><div class="td k1" style="left:81px;width:110px">Network Camera</div><div class="td k2" style="left:191px;width:50px">Active</div><div class="td k3" style="left:241px;width:110px">1C:C3:16:20:00:EF</div><div class="td k4" style="left:351px;width:92px">192.168.7.100</div><div class="td k5" style="left:443px;width:40px">80</div><div class="td k6" style="left:483px;width:87px">255.255.240.0</div><div class="td k7" style="left:570px;width:83px">192.168.7.1</div><div class="td k8" style="left:653px;width:96px">MS-C2862-FPB</div><div class="td k9 two" style="left:749px;width:101px">2019-09-23<br>14:06:52</div><div class="td k10" style="left:850px;width:87px">41.7.0.72-a5</div><div class="ie"><svg width="20" height="20" viewBox="0 0 20 20"><circle cx="10" cy="10" r="10" class="iec"/><text x="5.6" y="14.6" font-family="Liberation Sans, sans-serif" font-weight="bold" font-style="italic" font-size="15.5" class="iet">e</text><path class="ieo" d="M6.2 12.4 C4.6 15.6 6 16.8 9 15.4 M13.4 4.6 C15.6 3.2 17 4 16 6"/></svg></div>
</div>
<div class="tr alt" style="top:60px">
<span class="chk"></span><div class="td k0" style="left:41px;width:40px">60</div><div class="td k1" style="left:81px;width:110px">Network Camera</div><div class="td k2" style="left:191px;width:50px">Active</div><div class="td k3" style="left:241px;width:110px">1C:C3:16:21:00:22</div><div class="td k4" style="left:351px;width:92px">192.168.7.104</div><div class="td k5" style="left:443px;width:40px">80</div><div class="td k6" style="left:483px;width:87px">255.255.240.0</div><div class="td k7" style="left:570px;width:83px">192.168.7.1</div><div class="td k8" style="left:653px;width:96px">MS-C2962-FIPB</div><div class="td k9 two" style="left:749px;width:101px">2019-09-02<br>03:22:14</div><div class="td k10" style="left:850px;width:87px">40.7.0.69-r11</div><div class="ie"><svg width="20" height="20" viewBox="0 0 20 20"><circle cx="10" cy="10" r="10" class="iec"/><text x="5.6" y="14.6" font-family="Liberation Sans, sans-serif" font-weight="bold" font-style="italic" font-size="15.5" class="iet">e</text><path class="ieo" d="M6.2 12.4 C4.6 15.6 6 16.8 9 15.4 M13.4 4.6 C15.6 3.2 17 4 16 6"/></svg></div>
</div>
<div class="tr sel" style="top:90px">
<span class="chk on"></span><div class="td k0" style="left:41px;width:40px">61</div><div class="td k1" style="left:81px;width:110px">Network Camera</div><div class="td k2" style="left:191px;width:50px">Active</div><div class="td k3 la" style="left:241px;width:110px">1C:C3:16:24:09:...</div><div class="td k4" style="left:351px;width:92px">192.168.7.114</div><div class="td k5" style="left:443px;width:40px">80</div><div class="td k6" style="left:483px;width:87px">255.255.240.0</div><div class="td k7" style="left:570px;width:83px">192.168.7.1</div><div class="td k8" style="left:653px;width:96px">MS-C2964-FPB</div><div class="td k9 two" style="left:749px;width:101px">2019-09-30<br>08:55:39</div><div class="td k10" style="left:850px;width:87px">40.7.0.72</div><div class="ie on"><svg width="20" height="20" viewBox="0 0 20 20"><circle cx="10" cy="10" r="10" class="iec"/><text x="5.6" y="14.6" font-family="Liberation Sans, sans-serif" font-weight="bold" font-style="italic" font-size="15.5" class="iet">e</text><path class="ieo" d="M6.2 12.4 C4.6 15.6 6 16.8 9 15.4 M13.4 4.6 C15.6 3.2 17 4 16 6"/></svg></div>
</div>
<div class="tr alt" style="top:120px">
<span class="chk"></span><div class="td k0" style="left:41px;width:40px">62</div><div class="td k1" style="left:81px;width:110px">Network Camera</div><div class="td k2" style="left:191px;width:50px">Active</div><div class="td k3" style="left:241px;width:110px">1C:C3:16:23:01:39</div><div class="td k4" style="left:351px;width:92px">192.168.7.124</div><div class="td k5" style="left:443px;width:40px">80</div><div class="td k6" style="left:483px;width:87px">255.255.240.0</div><div class="td k7" style="left:570px;width:83px">192.168.9.2</div><div class="td k8" style="left:653px;width:96px">MS-C2962-FPB</div><div class="td k9 two" style="left:749px;width:101px">2019-09-26<br>08:28:26</div><div class="td k10" style="left:850px;width:87px">41.7.0.71-r35</div><div class="ie"><svg width="20" height="20" viewBox="0 0 20 20"><circle cx="10" cy="10" r="10" class="iec"/><text x="5.6" y="14.6" font-family="Liberation Sans, sans-serif" font-weight="bold" font-style="italic" font-size="15.5" class="iet">e</text><path class="ieo" d="M6.2 12.4 C4.6 15.6 6 16.8 9 15.4 M13.4 4.6 C15.6 3.2 17 4 16 6"/></svg></div>
</div>
<div class="tr" style="top:150px">
<span class="chk"></span><div class="td k0" style="left:41px;width:40px">63</div><div class="td k1" style="left:81px;width:110px">IPCAM</div><div class="td k2" style="left:191px;width:50px">Active</div><div class="td k3" style="left:241px;width:110px">1C:C3:16:21:FA:67</div><div class="td k4" style="left:351px;width:92px">192.168.7.132</div><div class="td k5" style="left:443px;width:40px">80</div><div class="td k6" style="left:483px;width:87px">255.255.255.0</div><div class="td k7" style="left:570px;width:83px">192.168.5.1</div><div class="td k8" style="left:653px;width:96px">MS-C3772-FIPB</div><div class="td k9 two" style="left:749px;width:101px">2019-09-27<br>11:25:49</div><div class="td k10" style="left:850px;width:87px">41.7.0.71-r15</div><div class="ie"><svg width="20" height="20" viewBox="0 0 20 20"><circle cx="10" cy="10" r="10" class="iec"/><text x="5.6" y="14.6" font-family="Liberation Sans, sans-serif" font-weight="bold" font-style="italic" font-size="15.5" class="iet">e</text><path class="ieo" d="M6.2 12.4 C4.6 15.6 6 16.8 9 15.4 M13.4 4.6 C15.6 3.2 17 4 16 6"/></svg></div>
</div>
<div class="tr alt" style="top:180px">
<span class="chk"></span><div class="td k0" style="left:41px;width:40px">64</div><div class="td k1" style="left:81px;width:110px">Network Camera</div><div class="td k2" style="left:191px;width:50px">Active</div><div class="td k3" style="left:241px;width:110px">1C:C3:16:24:66:A1</div><div class="td k4" style="left:351px;width:92px">192.168.7.161</div><div class="td k5" style="left:443px;width:40px">80</div><div class="td k6" style="left:483px;width:87px">255.255.240.0</div><div class="td k7" style="left:570px;width:83px">192.168.5.1</div><div class="td k8" style="left:653px;width:96px">MS-C2962-FPB</div><div class="td k9 two" style="left:749px;width:101px">2019-09-26<br>09:46:16</div><div class="td k10" style="left:850px;width:87px">40.7.0.71-r8</div><div class="ie"><svg width="20" height="20" viewBox="0 0 20 20"><circle cx="10" cy="10" r="10" class="iec"/><text x="5.6" y="14.6" font-family="Liberation Sans, sans-serif" font-weight="bold" font-style="italic" font-size="15.5" class="iet">e</text><path class="ieo" d="M6.2 12.4 C4.6 15.6 6 16.8 9 15.4 M13.4 4.6 C15.6 3.2 17 4 16 6"/></svg></div>
</div>
<div class="tr" style="top:210px">
<span class="chk"></span><div class="td k0" style="left:41px;width:40px">65</div><div class="td k1" style="left:81px;width:110px">Network Camera</div><div class="td k2" style="left:191px;width:50px">Active</div><div class="td k3" style="left:241px;width:110px">1C:C3:16:22:19:6F</div><div class="td k4" style="left:351px;width:92px">192.168.7.201</div><div class="td k5" style="left:443px;width:40px">80</div><div class="td k6" style="left:483px;width:87px">255.255.240.0</div><div class="td k7" style="left:570px;width:83px">192.168.7.1</div><div class="td k8" style="left:653px;width:96px">MS-C9674-PB</div><div class="td k9 two" style="left:749px;width:101px">2019-09-17<br>11:20:43</div><div class="td k10 two" style="left:850px;width:87px">43.7.0.72-fsh-<br>autotrack-a2</div><div class="ie"><svg width="20" height="20" viewBox="0 0 20 20"><circle cx="10" cy="10" r="10" class="iec"/><text x="5.6" y="14.6" font-family="Liberation Sans, sans-serif" font-weight="bold" font-style="italic" font-size="15.5" class="iet">e</text><path class="ieo" d="M6.2 12.4 C4.6 15.6 6 16.8 9 15.4 M13.4 4.6 C15.6 3.2 17 4 16 6"/></svg></div>
</div>
<div class="tr alt" style="top:240px">
<span class="chk"></span><div class="td k0" style="left:41px;width:40px">66</div><div class="td k1" style="left:81px;width:110px">Network Camera</div><div class="td k2" style="left:191px;width:50px">Active</div><div class="td k3" style="left:241px;width:110px">1C:C3:16:22:01:0B</div><div class="td k4" style="left:351px;width:92px">192.168.7.202</div><div class="td k5" style="left:443px;width:40px">4200</div><div class="td k6" style="left:483px;width:87px">255.255.240.0</div><div class="td k7" style="left:570px;width:83px">192.168.7.2</div><div class="td k8" style="left:653px;width:96px">MS-C9674-PB</div><div class="td k9 two" style="left:749px;width:101px">2019-07-31<br>23:53:33</div><div class="td k10" style="left:850px;width:87px">42.7.0.67-r1</div><div class="ie"><svg width="20" height="20" viewBox="0 0 20 20"><circle cx="10" cy="10" r="10" class="iec"/><text x="5.6" y="14.6" font-family="Liberation Sans, sans-serif" font-weight="bold" font-style="italic" font-size="15.5" class="iet">e</text><path class="ieo" d="M6.2 12.4 C4.6 15.6 6 16.8 9 15.4 M13.4 4.6 C15.6 3.2 17 4 16 6"/></svg></div>
</div>
<div class="tr" style="top:270px">
<span class="chk"></span><div class="td k0" style="left:41px;width:40px">67</div><div class="td k1" style="left:81px;width:110px">202<svg class="cj" width="48" height="12" viewBox="0 0 48 12"><g fill="none" stroke="#000" stroke-width="1"><path d="M1 4.5H11M6 .5V4.5C5.6 8 3.6 10.4 .8 11.6M6.1 4.8C6.8 8 8.8 10.4 11.4 11.4"/><path d="M18 .6L12.6 5.4M18 .6L23.6 5.4M15.4 5.5H20.6M13 8H23M17.4 8L14.6 11.2L21.8 10.8M20.4 9.2L22.6 11.8"/><path d="M25.4 1L26.6 2.4M24.4 4.5H27V10.4L28.6 8.8M31.4 .6L32.4 2.4M34.6 2.6C33.6 6.6 31.4 9.8 28.6 11.6M29.6 3C30.6 7 32.6 9.8 35.6 11.4"/><path d="M42 0V1.6M37.2 3.8V2.2H46.8V3.8M38.6 4.6H45.4M41.6 4.6L39.4 7L45 6.8M43.6 5.8L45.2 7.4M39 9.1H45M42 7.4V11.5M37 11.5H47"/></g></svg>1</div><div class="td k2" style="left:191px;width:50px">Active</div><div class="td k3" style="left:241px;width:110px">1C:C3:16:21:01:10</div><div class="td k4" style="left:351px;width:92px">192.168.7.212</div><div class="td k5" style="left:443px;width:40px">80</div><div class="td k6" style="left:483px;width:87px">255.255.240.0</div><div class="td k7" style="left:570px;width:83px">192.168.7.1</div><div class="td k8" style="left:653px;width:96px">MS-C2972-FPB</div><div class="td k9 two" style="left:749px;width:101px">2019-09-25<br>14:19:04</div><div class="td k10" style="left:850px;width:87px">40.7.0.71-r15</div><div class="ie"><svg width="20" height="20" viewBox="0 0 20 20"><circle cx="10" cy="10" r="10" class="iec"/><text x="5.6" y="14.6" font-family="Liberation Sans, sans-serif" font-weight="bold" font-style="italic" font-size="15.5" class="iet">e</text><path class="ieo" d="M6.2 12.4 C4.6 15.6 6 16.8 9 15.4 M13.4 4.6 C15.6 3.2 17 4 16 6"/></svg></div>
</div>
<div class="tr alt" style="top:300px">
<span class="chk"></span><div class="td k0" style="left:41px;width:40px">68</div><div class="td k1" style="left:81px;width:110px">202<svg class="cj" width="48" height="12" viewBox="0 0 48 12"><g fill="none" stroke="#000" stroke-width="1"><path d="M1 4.5H11M6 .5V4.5C5.6 8 3.6 10.4 .8 11.6M6.1 4.8C6.8 8 8.8 10.4 11.4 11.4"/><path d="M18 .6L12.6 5.4M18 .6L23.6 5.4M15.4 5.5H20.6M13 8H23M17.4 8L14.6 11.2L21.8 10.8M20.4 9.2L22.6 11.8"/><path d="M25.4 1L26.6 2.4M24.4 4.5H27V10.4L28.6 8.8M31.4 .6L32.4 2.4M34.6 2.6C33.6 6.6 31.4 9.8 28.6 11.6M29.6 3C30.6 7 32.6 9.8 35.6 11.4"/><path d="M42 0V1.6M37.2 3.8V2.2H46.8V3.8M38.6 4.6H45.4M41.6 4.6L39.4 7L45 6.8M43.6 5.8L45.2 7.4M39 9.1H45M42 7.4V11.5M37 11.5H47"/></g></svg>3</div><div class="td k2" style="left:191px;width:50px">Active</div><div class="td k3 la" style="left:241px;width:110px">1C:C3:16:21:32:...</div><div class="td k4" style="left:351px;width:92px">192.168.7.214</div><div class="td k5" style="left:443px;width:40px">80</div><div class="td k6" style="left:483px;width:87px">255.255.240.0</div><div class="td k7" style="left:570px;width:83px">192.168.7.1</div><div class="td k8" style="left:653px;width:96px">MS-C2972-PB</div><div class="td k9 two" style="left:749px;width:101px">2019-09-26<br>13:02:11</div><div class="td k10" style="left:850px;width:87px">40.7.0.71-r15</div><div class="ie"><svg width="20" height="20" viewBox="0 0 20 20"><circle cx="10" cy="10" r="10" class="iec"/><text x="5.6" y="14.6" font-family="Liberation Sans, sans-serif" font-weight="bold" font-style="italic" font-size="15.5" class="iet">e</text><path class="ieo" d="M6.2 12.4 C4.6 15.6 6 16.8 9 15.4 M13.4 4.6 C15.6 3.2 17 4 16 6"/></svg></div>
</div>
</div>
<div id="vsb"><div id="vth"></div></div>
<div id="hsb"><div id="hth"></div></div>
<div id="corner"></div>
<div id="tbot"></div>
<!-- info bar -->
<div class="lab sh" style="left:31px;top:485px">1/386</div>
<div class="lab sh" style="left:99px;top:485px">Device Name:</div>
<div class="pill f" style="left:179px;top:484px;width:93px"><span class="ptx" style="left:4px;letter-spacing:.15px">etwork Camera</span><span style="left:3px;top:4px;width:1px;height:10px;background:#7ac6ea"></span></div>
<div class="lab sh" style="left:293px;top:485px">IP:</div>
<div class="pill f" style="left:310px;top:484px;width:93px"><span class="ptx" style="left:7px">192.168.7</span><span class="ptx" style="left:67px">.114</span></div>
<div class="lab sh" style="left:423px;top:485px">Port:</div>
<div class="pill f" style="left:451px;top:484px;width:48px"><span class="ptx" style="left:6px">80</span></div>
<div class="lab sh" style="left:520px;top:485px">Netmask:</div>
<div class="pill f" style="left:576px;top:484px;width:93px"><span class="ptx" style="left:6px">255.255.240.0</span></div>
<div class="lab sh" style="left:689.5px;top:485px;letter-spacing:-.2px">Gateway:</div>
<div class="pill f" style="left:742px;top:484px;width:93px"><span class="ptx" style="left:7px">192.168.7</span><span class="ptx" style="left:67px">.1</span></div>
<div class="lab sh" style="left:856px;top:485px">DNS:</div>
<div class="pill f" style="left:888px;top:484px;width:93px"><span class="ptx" style="left:5.5px">8</span><span class="ptx" style="left:19px">.8</span><span class="ptx" style="left:35px">.8</span><span class="ptx" style="left:51px">.8</span></div>

<!-- action buttons -->
<div class="rb" style="left:657.6px;top:511.5px"></div>
<svg style="left:657px;top:512px" width="28" height="28" viewBox="-14 -14 28 28">
<g fill="none" stroke="#f4f4f4" stroke-width="1.5">
<path d="M0.6 -9 A9 9 0 0 0 -5.4 7.2"/>
<path d="M-0.6 9 A9 9 0 0 0 5.4 -7.2"/>
</g>
<path d="M-7.5 8 H-3 V4 Z" fill="#f4f4f4"/>
<path d="M7.5 -8 H3 V-4 Z" fill="#f4f4f4"/>
<path d="M0.9 -5.1 L-3.5 1.3 L-1 1 L-1.7 5.7 L2.9 -0.8 L0.5 -0.5 Z" fill="#f4f4f4"/>
</svg>
<div class="lab sh" style="left:690px;top:518px;letter-spacing:.2px">Activate</div>

<div class="rb" style="left:749px;top:511.5px"></div>
<svg style="left:749px;top:512px" width="28" height="28" viewBox="-14 -14 28 28">
<path d="M-2 -7.9 H2.8 V-2.5 H5.2 L0.4 2.2 L-4.4 -2.5 H-2 Z" fill="#f4f4f4"/>
<rect x="-8.2" y="1.8" width="17.2" height="4.3" fill="#f4f4f4"/>
<rect x="4.9" y="3.3" width="1.2" height="1.2" fill="#8a8a8a"/><rect x="6.8" y="3.3" width="1.2" height="1.2" fill="#8a8a8a"/>
</svg>
<div class="lab sh" style="left:782px;top:518px">Export Device List</div>

<div class="rb" style="left:903px;top:511.5px"></div>
<svg style="left:903.2px;top:512.2px" width="28" height="28" viewBox="-14 -14 28 28">
<g transform="scale(-0.77 0.77)">
<g stroke-linecap="round" fill="none">
<path d="M2 -2 L-6 6" stroke="#f4f4f4" stroke-width="1.3"/>
<path d="M-5.8 5.6 L-8 8.2" stroke="#f4f4f4" stroke-width="2.3"/>
<path d="M2.4 -2.6 L7.2 -7.4" stroke="#f4f4f4" stroke-width="3.8"/>
<path d="M-4 -3.5 L6 6.6" stroke="#828282" stroke-width="6.2"/>
<path d="M-4 -3.5 L6 6.6" stroke="#f4f4f4" stroke-width="4.3"/>
</g>
<circle cx="-5.5" cy="-5.1" r="4.3" fill="#f4f4f4"/>
<path d="M-10.4 -10 L-6.3 -5.9" stroke="#828282" stroke-width="2.9"/>
<circle cx="5.9" cy="6.5" r="1.05" fill="#828282"/>
</g>
</svg>
<div class="lab sh" style="left:936px;top:518px">Modify</div>

<!-- log -->
<div class="lab sh" style="left:26px;top:541px;letter-spacing:.1px">Operating Information</div>
<div id="log">
<div id="logrow">
<span class="lt" style="left:16px">1</span>
<span class="lt" style="left:57px">2019-09-30 09:10:53</span>
<span class="lt" style="left:345px;letter-spacing:-0.53px">[1C:C3:16:24:09:D2]</span><span class="lt" style="left:449.2px;letter-spacing:0.17px">Modify</span><span class="lt" style="left:493.2px;letter-spacing:-0.445px">IP:192.168.7.113-&gt;192.168.7.114</span><span class="lt" style="left:660px;letter-spacing:-0.16px">successfully.</span>
</div>
</div>
<div id="redbox"></div>

<!-- save / clear -->
<div class="rb" style="left:817px;top:687px"></div>
<svg style="left:816px;top:687px" width="28" height="28" viewBox="-14 -14 28 28">
<path d="M-6.8 -7.4 H5.2 L7 -5.6 V6.6 H-6.8 Z" fill="#f2f2f2"/>
<rect x="-3.6" y="-7.4" width="7.6" height="5" fill="#7e7e7e"/>
<rect x="-2.7" y="-7.4" width="5.8" height="4.1" fill="#f2f2f2"/>
<rect x="0.7" y="-6.5" width="1.5" height="2.5" fill="#7e7e7e"/>
</svg>
<div class="lab sh" style="left:849px;top:693.5px;letter-spacing:-.1px">Save</div>
<div class="rb" style="left:895.5px;top:687px"></div>
<svg style="left:895.5px;top:687px" width="28" height="28" viewBox="-14 -14 28 28">
<circle r="8.2" fill="#f4f4f4"/>
<path d="M-3.6 -3.6 L3.6 3.6 M3.6 -3.6 L-3.6 3.6" stroke="#808080" stroke-width="1.3"/>
</svg>
<div class="lab sh" style="left:928.5px;top:693.5px;letter-spacing:.1px">Clear</div>
<div class="sh" id="ver">V2.4.0.1-r6</div>
</div>
</body></html>
